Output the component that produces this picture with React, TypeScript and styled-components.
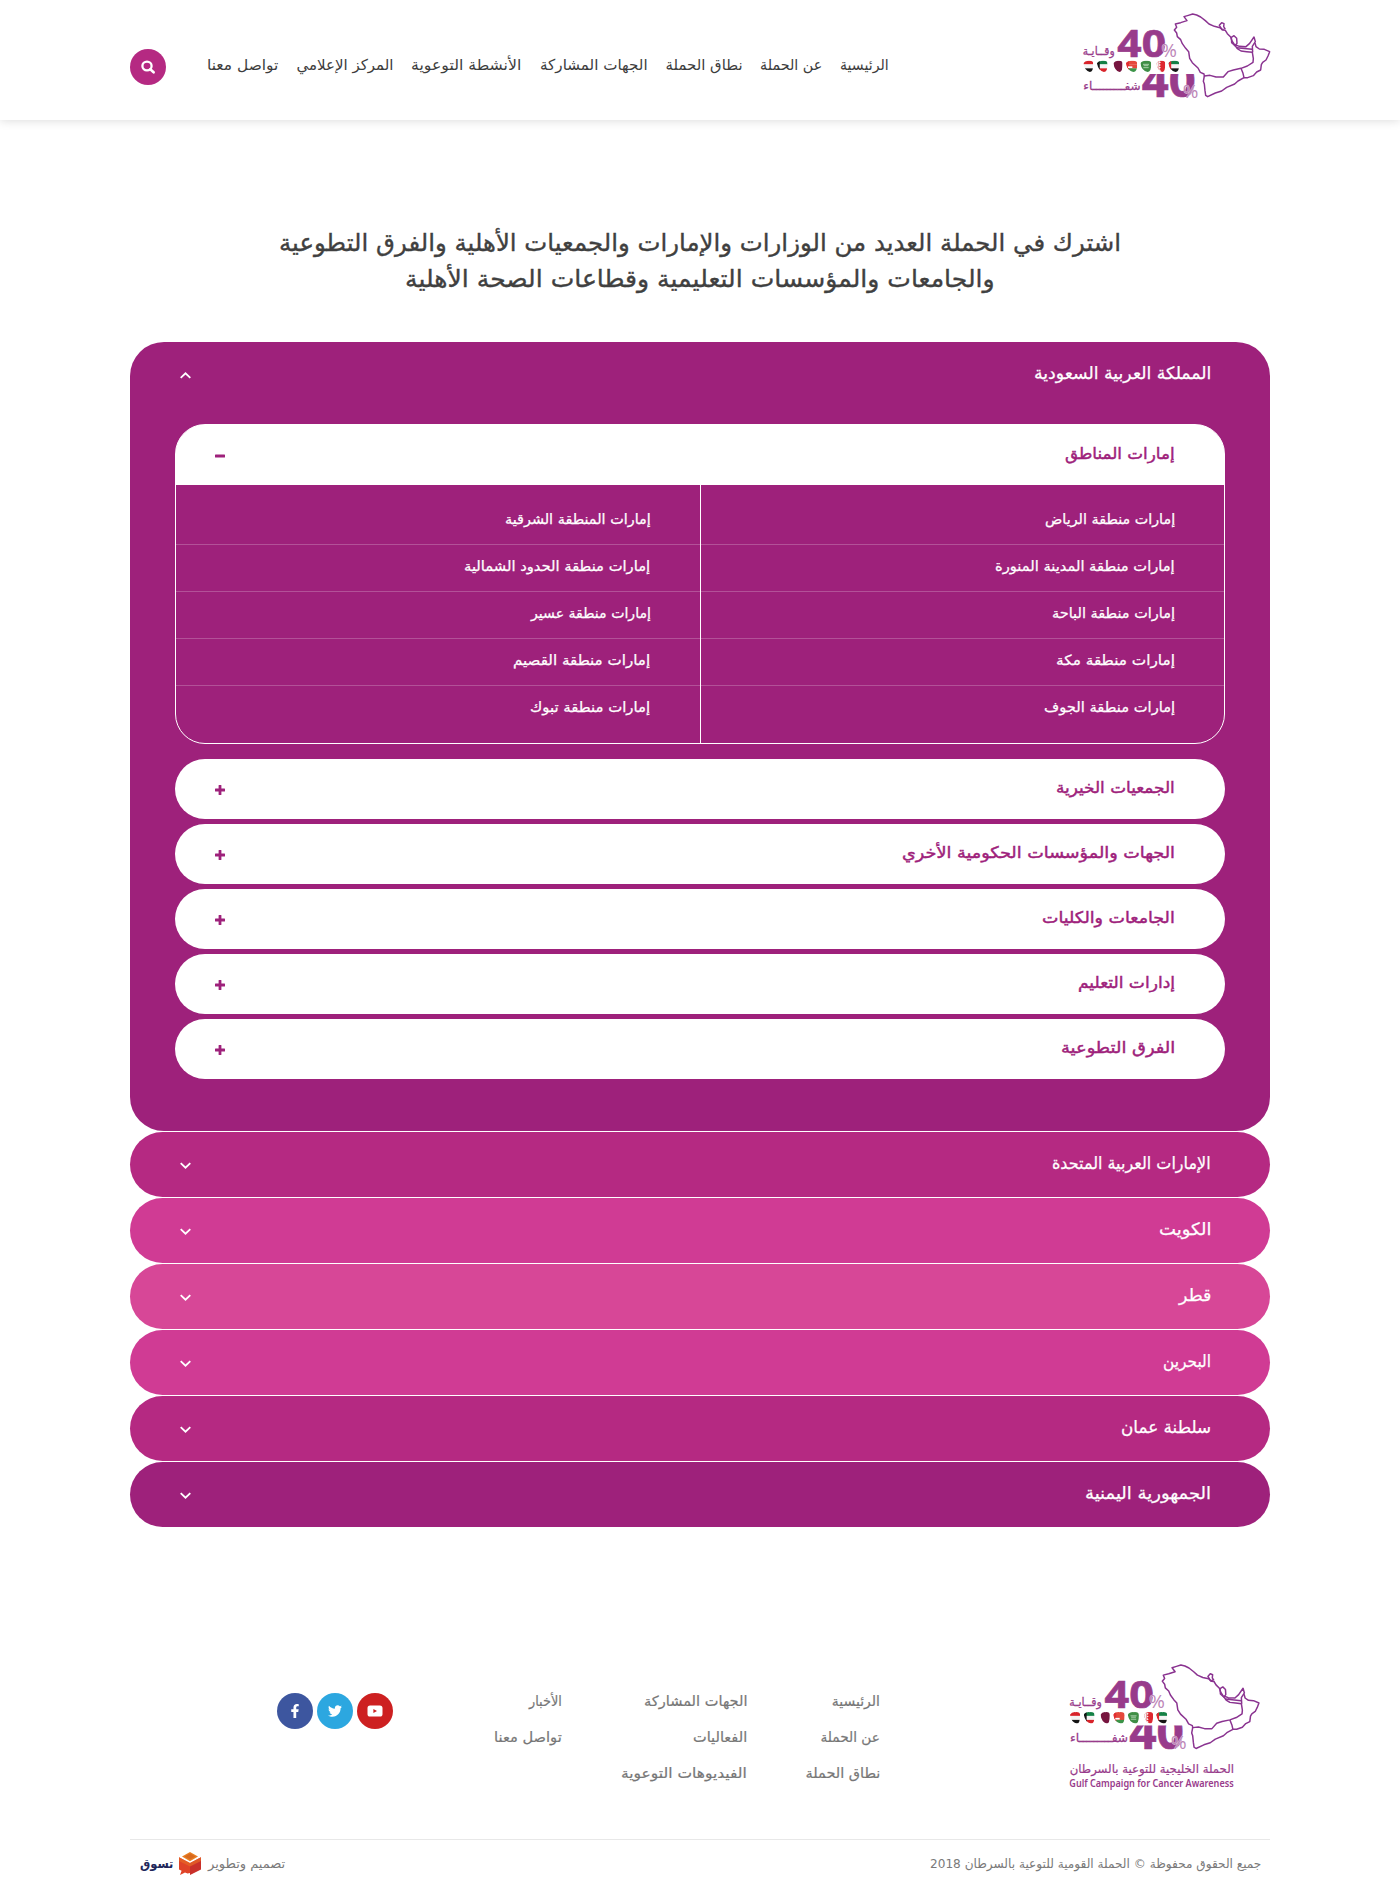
import React, { useLayoutEffect, useRef, useState } from "react";
import styled, { createGlobalStyle, css } from "styled-components";
import { FaFacebookF, FaTwitter } from "react-icons/fa";

const plum = "#9e217b";
const sans = `"DejaVu Sans", "Noto Sans", sans-serif`;

const Global = createGlobalStyle`
  * { box-sizing: border-box; }
  body { margin: 0; background: #fff; font-family: ${sans}; color: #3d3d3d; }
  a { color: inherit; text-decoration: none; }
  ul { list-style: none; margin: 0; padding: 0; }
  h1, h2, h3 { margin: 0; font-weight: 400; }
`;

/* ---------- condensed text ---------- */

const FitBox = styled.span<{ $w: number }>`
  display: block;
  flex: none;
  width: ${(p) => p.$w}px;
  white-space: nowrap;
`;

const FitInner = styled.span`
  display: inline-block;
  transform-origin: 100% 50%;
`;

function Fit({ w, children }: { w: number; children: React.ReactNode }) {
  const ref = useRef<HTMLSpanElement>(null);
  const [k, setK] = useState(1);
  useLayoutEffect(() => {
    if (ref.current && ref.current.offsetWidth) setK(w / ref.current.offsetWidth);
  }, [w]);
  return (
    <FitBox $w={w}>
      <FitInner ref={ref} style={{ transform: `scaleX(${k})` }}>
        {children}
      </FitInner>
    </FitBox>
  );
}

type Label = [text: string, width: number];

/* ---------- page frame ---------- */

const Page = styled.div`
  direction: rtl;
  height: 1892px;
  display: flex;
  flex-direction: column;
  overflow: hidden;
`;

const Container = styled.div`
  width: 1140px;
  margin: 0 auto;
`;

const Header = styled.header`
  height: 120px;
  flex: none;
  background: #fff;
  box-shadow: 0 0 10px rgba(0, 0, 0, 0.16);
`;

const HeaderRow = styled(Container)`
  height: 120px;
  display: flex;
  align-items: flex-start;
`;

const HeaderLogo = styled.div`
  width: 188px;
  margin-top: 12px;
  margin-left: 193px;
  svg { display: block; overflow: visible; }
`;

const Nav = styled.nav`
  display: flex;
  gap: 17.8px;
  margin-top: 50px;
  font-size: 15px;
  line-height: 30px;
`;

const Search = styled.button`
  width: 36px;
  height: 36px;
  margin: 49px auto 0 0;
  padding: 0;
  border: 0;
  border-radius: 50%;
  background: #b52982;
  display: flex;
  align-items: center;
  justify-content: center;
`;

const Title = styled.h1`
  height: 108px;
  margin-top: 105px;
  display: flex;
  flex-direction: column;
  align-items: center;
  font-size: 24px;
  line-height: 36px;
  color: #404040;
  -webkit-text-stroke: 0.35px;
`;

/* ---------- country accordion ---------- */

const Accordion = styled(Container)`
  display: flex;
  flex-direction: column;
  gap: 1px;
  margin-top: 9px;
`;

const Country = styled.section<{ $bg: string }>`
  background: ${(p) => p.$bg};
  border-radius: 34px;
  color: #fff;
`;

const CountryHead = styled.h2`
  height: 65px;
  padding: 0 59px 0 50px;
  display: flex;
  align-items: center;
  justify-content: space-between;
  font-size: 17px;
  line-height: 61px;
  -webkit-text-stroke: 0.25px;
  ${FitBox} { margin-top: -2px; }
  svg { margin-top: 1px; }
`;

const CountryBody = styled.div`
  padding: 17px 45px 52px;
  display: flex;
  flex-direction: column;
  gap: 5px;
`;

const Group = styled.div<{ $open?: boolean }>`
  border-radius: 30px;
  background: #fff;
  overflow: hidden;
  ${(p) =>
    p.$open &&
    css`
      height: 320px;
      margin-bottom: 10px;
      border: 1px solid #fff;
      background: linear-gradient(#fff 60px, ${plum} 60px);
    `}
`;

const GroupHead = styled.h3<{ $open?: boolean }>`
  height: 60px;
  padding: 0 ${(p) => (p.$open ? 49 : 50)}px 0 ${(p) => (p.$open ? 39 : 40)}px;
  display: flex;
  align-items: center;
  justify-content: space-between;
  color: ${plum};
  font-size: 16px;
  line-height: 56px;
  -webkit-text-stroke: 0.45px;
  ${FitBox} { margin-top: -2px; }
  svg { margin-top: 2px; }
`;

const Columns = styled.div`
  display: flex;
  height: 258px;
`;

const Column = styled.ul`
  flex: 1;
  padding-top: 13px;
  & + & { border-right: 1px solid #fff; }
`;

const Region = styled.li`
  height: 47px;
  padding-right: 49px;
  font-size: 14px;
  line-height: 42px;
  border-bottom: 1px solid rgba(255, 255, 255, 0.22);
  -webkit-text-stroke: 0.25px;
  &:last-child { border-bottom: 0; }
`;

/* ---------- footer ---------- */

const FooterRow = styled(Container)`
  height: 175px;
  margin-top: 137px;
  display: flex;
  align-items: flex-start;
`;

const FooterLogo = styled.div`
  width: 190px;
  margin: 0 11px 0 189px;
  svg { display: block; overflow: visible; }
`;

const LinkColumn = styled.ul<{ $w: number }>`
  width: ${(p) => p.$w}px;
  margin-top: 19px;
  font-size: 14px;
  line-height: 36px;
  color: #777;
  -webkit-text-stroke: 0.2px;
`;

const Socials = styled.div`
  display: flex;
  gap: 4px;
  margin: 29px auto 0 147px;
`;

const Social = styled.a<{ $bg: string }>`
  width: 36px;
  height: 36px;
  border-radius: 50%;
  background: ${(p) => p.$bg};
  color: #fff;
  font-size: 14px;
  display: flex;
  align-items: center;
  justify-content: center;
`;

const Bottom = styled(Container)`
  border-top: 1px solid #e8e8e8;
  padding: 0 9px 0 10px;
  height: 53px;
  display: flex;
  justify-content: space-between;
  font-size: 12.5px;
  line-height: 48px;
  color: #7a7a7a;
`;

const Credit = styled.div`
  display: flex;
  svg { margin: 12px 7px 0 6px; }
`;

const Brand = styled.b`
  color: #20265a;
  font-size: 12.5px;
  line-height: 48px;
`;

/* ---------- drawings ---------- */

const flags: { x: number; w: number; bands: string[]; side?: string }[] = [
  { x: 70, w: 30, bands: ["#d8232a", "#f4f4f4", "#151515"] },
  { x: 111, w: 32, bands: ["#148045", "#f4f4f4", "#d8232a"], side: "#151515" },
  { x: 160, w: 28, bands: ["#77153f"] },
  { x: 198, w: 34, bands: ["#e5483c", "#e5483c", "#3c9448"], side: "#e02c30" },
  { x: 241, w: 33, bands: ["#3f8e45"] },
  { x: 289, w: 27, bands: ["#de2830"], side: "#f4f4f4" },
  { x: 325, w: 33, bands: ["#148045", "#f4f4f4", "#151515"], side: "#de2830" },
];

function LogoArt({ id }: { id: string }) {
  const ink = "#983b8b";
  return (
    <>
      <defs>
        <clipPath id={`${id}-low`}>
          <rect x="240" y="222" width="180" height="80" />
        </clipPath>
        {flags.map((f, i) => (
          <clipPath id={`${id}-f${i}`} key={i}>
            <path
              d={`M${f.x} 190 Q${f.x + 5} 181 ${f.x + f.w * 0.55} 182 Q${f.x + f.w} 181 ${f.x + f.w} 191 Q${f.x + f.w} 216 ${f.x + f.w * 0.65} 216 Q${f.x + 4} 213 ${f.x} 190Z`}
            />
          </clipPath>
        ))}
      </defs>
      <g fill="none" stroke="#8a3390" strokeWidth="4.4" strokeLinejoin="round">
        <path d="M343 90 L350 82 346 72 362 68 381 62 372 50 385 46 398 42 410 45 422 51 436 62 447 72 463 79 480 83 488 90 496 91 502 101 512 111 516 123 524 135 532 146 543 153 560 155 577 157 580 176 579 187 562 198 543 205 520 210 504 215 490 231 468 231 450 226 433 228 432 222 421 217 414 204 397 188 389 175 386 155 377 145 367 131 362 119 352 110 350 99Z" />
        <path d="M478 76 L485 68 492 71 491 80 495 86 486 89Z" />
        <path d="M514 112 L522 107 530 115 531 130 525 137 515 128Z" />
        <path d="M527 135 L538 139 558 140 569 130 582 111 586 125 577 139 578 157 M530 143 L576 148" />
        <path d="M585 129 L588 140 598 147 613 148 629 155 624 168 618 180 608 187 604 194 602 210 590 216 580 227 563 233 552 233 549 220 543 205" />
        <path d="M552 233 L534 243 524 252 500 262 485 273 466 279 443 290 437 286 435 272 433 252 430 244 433 228" />
      </g>
      <g fill={ink} stroke={ink} strokeWidth="2" fontFamily='"Open Sans", "Noto Sans", sans-serif' fontWeight="700" direction="ltr">
        <text x="172" y="171" fontSize="114" textLength="146" lengthAdjust="spacingAndGlyphs">40</text>
        <g clipPath={`url(#${id}-low)`}>
          <text x="245" y="292" fontSize="142" textLength="162" lengthAdjust="spacingAndGlyphs">40</text>
        </g>
      </g>
      <g fill="#bd86b8" stroke="#fff" strokeWidth="1.5" paintOrder="stroke" fontFamily='"Open Sans", sans-serif' direction="ltr">
        <text x="304" y="171" fontSize="56" textLength="47" lengthAdjust="spacingAndGlyphs">%</text>
        <text x="368" y="293" fontSize="56" textLength="47" lengthAdjust="spacingAndGlyphs">%</text>
      </g>
      <g fill={ink} stroke={ink} strokeWidth="0.8" fontFamily='"DejaVu Sans", sans-serif' fontSize="35" direction="rtl">
        <text x="164" y="164" textLength="96" lengthAdjust="spacingAndGlyphs">وقــايـة</text>
        <text x="242" y="270" textLength="172" lengthAdjust="spacingAndGlyphs">شفـــــــــاء</text>
      </g>
      {flags.map((f, i) => (
        <g key={i} clipPath={`url(#${id}-f${i})`}>
          {f.bands.map((c, j) => (
            <rect key={j} x={f.x} y={181 + (36 / f.bands.length) * j} width={f.w} height={36 / f.bands.length + 0.5} fill={c} />
          ))}
          {f.side && <rect x={f.x} y="181" width={f.w * 0.26} height="36" fill={f.side} />}
        </g>
      ))}
      <path d="M249 193h18M251 197h14M250 203h16" stroke="#dfeedd" strokeWidth="2" />
      <path d="M297 183l6 4-6 4 6 4-6 4 6 4-6 4 6 4-6 4" fill="#f4f4f4" />
      <path d="M204 199h13v5h-13z" fill="#fff" />
    </>
  );
}

const SearchIcon = () => (
  <svg width="14" height="14" viewBox="0 0 14 14" fill="none" stroke="#fff">
    <ellipse cx="6" cy="6" rx="4.6" ry="4.3" strokeWidth="2.3" />
    <path d="M9.3 9.3 L12.6 12.3" strokeWidth="2.6" strokeLinecap="round" />
  </svg>
);

const Chevron = ({ up }: { up?: boolean }) => (
  <svg width="11" height="7" viewBox="0 0 11 7" fill="none" stroke="#fff" strokeWidth="1.8">
    <path d={up ? "M0.7 5.9 L5.5 1.3 10.3 5.9" : "M0.7 1.1 L5.5 5.7 10.3 1.1"} />
  </svg>
);

const Sign = ({ minus }: { minus?: boolean }) => (
  <svg width="10" height="10" viewBox="0 0 10 10" fill={plum}>
    <rect x="0" y="3.6" width="10" height="2.8" rx="0.5" />
    {!minus && <rect x="3.6" y="0" width="2.8" height="10" rx="0.5" />}
  </svg>
);

const YoutubeIcon = () => (
  <svg width="16" height="12" viewBox="0 0 16 12">
    <rect x="0.5" y="0.5" width="15" height="11" rx="2.6" fill="#fff" />
    <path d="M6.4 4 L10 6 6.4 8Z" fill="#cd2021" />
  </svg>
);

const BoxIcon = () => (
  <svg width="22" height="24" viewBox="0 0 22 24">
    <path d="M11 0 L19 4.5 11 9.2 3 4.5Z" fill="#e87f23" />
    <path d="M11 1.5 L16.5 4.5 11 7.5 5.5 4.5Z" fill="#d8691f" />
    <path d="M0 5.2 L11 11 V21 L8.6 21.6 6 20.6 1 23 2.6 18.8 0 17.6Z" fill="#df4327" />
    <path d="M22 5.2 L11 11 V23 L22 17.6Z" fill="#c9302a" />
    <path d="M0 5.2 L11 11 22 5.2 V9 L11 14.5 0 9Z" fill="#e66525" opacity="0.75" />
  </svg>
);

/* ---------- content ---------- */

const nav: Label[] = [
  ["الرئيسية", 49],
  ["عن الحملة", 62],
  ["نطاق الحملة", 77.5],
  ["الجهات المشاركة", 108],
  ["الأنشطة التوعوية", 110],
  ["المركز الإعلامي", 97],
  ["تواصل معنا", 71],
];

const regions: Label[][] = [
  [
    ["إمارات منطقة الرياض", 130],
    ["إمارات منطقة المدينة المنورة", 180],
    ["إمارات منطقة الباحة", 123],
    ["إمارات منطقة مكة", 119],
    ["إمارات منطقة الجوف", 131],
  ],
  [
    ["إمارات المنطقة الشرقية", 146],
    ["إمارات منطقة الحدود الشمالية", 186],
    ["إمارات منطقة عسير", 120],
    ["إمارات منطقة القصيم", 137],
    ["إمارات منطقة تبوك", 120],
  ],
];

const groups: Label[] = [
  ["الجمعيات الخيرية", 119],
  ["الجهات والمؤسسات الحكومية الأخري", 273],
  ["الجامعات والكليات", 133],
  ["إدارات التعليم", 97],
  ["الفرق التطوعية", 114],
];

const countries: [string, number, string][] = [
  ["الإمارات العربية المتحدة", 159, "#b52982"],
  ["الكويت", 53, "#d03b94"],
  ["قطر", 32, "#d74797"],
  ["البحرين", 48, "#d03b94"],
  ["سلطنة عمان", 90, "#b52982"],
  ["الجمهورية اليمنية", 126, plum],
];

const footerLinks: { w: number; items: Label[] }[] = [
  { w: 133, items: [["الرئيسية", 48], ["عن الحملة", 59.5], ["نطاق الحملة", 74.5]] },
  { w: 185, items: [["الجهات المشاركة", 103], ["الفعاليات", 54], ["الفيديوهات التوعوية", 126]] },
  { w: 22, items: [["الأخبار", 33], ["تواصل معنا", 68]] },
];

export default function App() {
  return (
    <Page>
      <Global />
      <Header>
        <HeaderRow>
          <HeaderLogo>
            <svg width="188" height="88" viewBox="66 36 564 264">
              <LogoArt id="top" />
            </svg>
          </HeaderLogo>
          <Nav>
            {nav.map(([t, w]) => (
              <a key={t}><Fit w={w}>{t}</Fit></a>
            ))}
          </Nav>
          <Search aria-label="بحث"><SearchIcon /></Search>
        </HeaderRow>
      </Header>

      <Title>
        <Fit w={842}>اشترك في الحملة العديد من الوزارات والإمارات والجمعيات الأهلية والفرق التطوعية</Fit>
        <Fit w={590}>والجامعات والمؤسسات التعليمية وقطاعات الصحة الأهلية</Fit>
      </Title>

      <Accordion>
        <Country $bg={plum}>
          <CountryHead>
            <Fit w={177}>المملكة العربية السعودية</Fit>
            <Chevron up />
          </CountryHead>
          <CountryBody>
            <Group $open>
              <GroupHead $open>
                <Fit w={110}>إمارات المناطق</Fit>
                <Sign minus />
              </GroupHead>
              <Columns>
                {regions.map((col, i) => (
                  <Column key={i}>
                    {col.map(([t, w]) => (
                      <Region key={t}><Fit w={w}>{t}</Fit></Region>
                    ))}
                  </Column>
                ))}
              </Columns>
            </Group>
            {groups.map(([t, w]) => (
              <Group key={t}>
                <GroupHead>
                  <Fit w={w}>{t}</Fit>
                  <Sign />
                </GroupHead>
              </Group>
            ))}
          </CountryBody>
        </Country>
        {countries.map(([t, w, bg]) => (
          <Country key={t} $bg={bg}>
            <CountryHead>
              <Fit w={w}>{t}</Fit>
              <Chevron />
            </CountryHead>
          </Country>
        ))}
      </Accordion>

      <FooterRow as="footer">
        <FooterLogo>
          <svg width="190" height="128" viewBox="57 42 570 384">
            <g transform="translate(-11 2.6) scale(1.014 1.01)">
              <LogoArt id="foot" />
            </g>
            <g fill="#983b8b">
              <text x="552" y="369" direction="rtl" fontFamily='"DejaVu Sans", sans-serif' fontSize="36" stroke="#983b8b" strokeWidth="0.6" textLength="493" lengthAdjust="spacingAndGlyphs">
                الحملة الخليجية للتوعية بالسرطان
              </text>
              <text x="58" y="410" direction="ltr" fontFamily='"Noto Sans", "Open Sans", sans-serif' fontWeight="600" fontSize="31" textLength="493" lengthAdjust="spacingAndGlyphs">
                Gulf Campaign for Cancer Awareness
              </text>
            </g>
          </svg>
        </FooterLogo>
        {footerLinks.map((col) => (
          <LinkColumn key={col.w} $w={col.w}>
            {col.items.map(([t, w]) => (
              <li key={t}><Fit w={w}>{t}</Fit></li>
            ))}
          </LinkColumn>
        ))}
        <Socials>
          <Social $bg="#cd2021"><YoutubeIcon /></Social>
          <Social $bg="#2ca7e0"><FaTwitter /></Social>
          <Social $bg="#3d569f"><FaFacebookF /></Social>
        </Socials>
      </FooterRow>

      <Bottom>
        <Fit w={331}>جميع الحقوق محفوظة © الحملة القومية للتوعية بالسرطان 2018</Fit>
        <Credit>
          <Fit w={77}>تصميم وتطوير</Fit>
          <BoxIcon />
          <Brand><Fit w={33}>تسوق</Fit></Brand>
        </Credit>
      </Bottom>
    </Page>
  );
}
